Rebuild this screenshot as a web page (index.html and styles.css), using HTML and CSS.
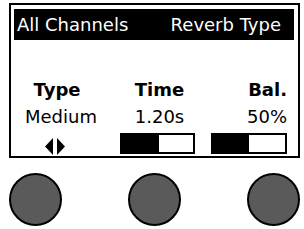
FILE: index.html
```html
<!DOCTYPE html>
<html lang="en">
<head>
    <meta charset="UTF-8">
    <link rel="stylesheet" href="styles.css">
    <title>Reverb Type</title>
</head>
<body>
    <!-- Display -->
    <div class="screen">
        <div class="screen-header">
            <span>All Channels</span>
            <span>Reverb Type</span>
        </div>
        <div class="params">
            <div class="param param-type">
                <div class="param-label">Type</div>
                <div class="param-value">Medium</div>
                <svg class="param-arrows" width="20" height="17" viewBox="0 0 20 17">
                    <polygon points="0,8.5 8,0 8,17" fill="#000"/>
                    <polygon points="12,0 20,8.5 12,17" fill="#000"/>
                </svg>
            </div>
            <div class="param param-time">
                <div class="param-label">Time</div>
                <div class="param-value">1.20s</div>
                <div class="param-bar"><div class="param-bar-fill" style="width: 52%"></div></div>
            </div>
            <div class="param param-bal">
                <div class="param-label">Bal.</div>
                <div class="param-value">50%</div>
                <div class="param-bar"><div class="param-bar-fill" style="width: 50%"></div></div>
            </div>
        </div>
    </div>

    <!-- Knobs -->
    <div class="knobs">
        <div class="knob"></div>
        <div class="knob"></div>
        <div class="knob"></div>
    </div>
</body>
</html>
```

FILE: styles.css
```css
/* Page */
body {
    margin: 0;
    background: #fff;
    font-family: "DejaVu Sans", Verdana, sans-serif;
    color: #000;
}

/* Display frame */
.screen {
    box-sizing: border-box;
    width: 291px;
    height: 155px;
    margin: 3px 0 0 9px;
    padding: 4px 4px 0 3px;
    border: 2px solid #000;
}

.screen-header {
    display: flex;
    justify-content: space-between;
    align-items: center;
    height: 31px;
    padding: 0 13px 0 3px;
    background: #000;
    color: #fff;
    font-size: 18px;
}

/* Parameter columns */
.params {
    display: grid;
    grid-template-columns: 94px 103px 1fr;
    margin-top: 39px;
    font-size: 18px;
    line-height: 21px;
}

.param {
    display: flex;
    flex-direction: column;
    align-items: center;
}

.param-label {
    font-weight: bold;
}

.param-value {
    margin-top: 6px;
}

.param-type .param-label {
    margin-right: 8px;
}

.param-arrows {
    margin-top: 11px;
    margin-right: 12px;
}

.param-bar {
    box-sizing: border-box;
    width: 75px;
    height: 21px;
    margin-top: 6px;
    border: 2px solid #000;
    background: #fff;
}

.param-bar-fill {
    height: 100%;
    background: #000;
}

.param-time .param-bar {
    margin-right: 4px;
}

.param-bal {
    align-items: flex-end;
    padding-right: 11px;
}

.param-bal .param-bar {
    align-self: flex-start;
    width: 76px;
}

/* Knobs */
.knobs {
    display: flex;
    justify-content: space-between;
    margin-top: 15px;
    padding: 0 4px 0 9px;
}

.knob {
    box-sizing: border-box;
    width: 53px;
    height: 53px;
    border: 2px solid #000;
    border-radius: 50%;
    background: #5a5a5a;
}
```
